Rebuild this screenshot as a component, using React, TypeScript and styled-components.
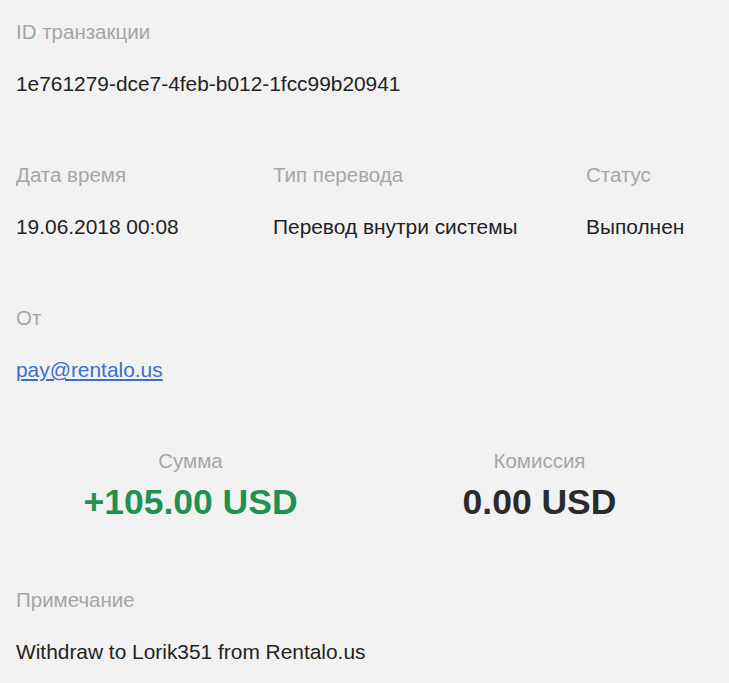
import React from "react";
import styled, { createGlobalStyle } from "styled-components";

const GlobalStyle = createGlobalStyle`
  html, body {
    margin: 0;
    padding: 0;
    background: #f2f2f2;
  }
  body {
    font-family: "Liberation Sans", Arial, sans-serif;
    color: #222;
  }
`;

function App() {
  return (
    <>
      <GlobalStyle />
      <DetailsContainer>
        <Block>
          <Field>
            <Label>ID транзакции</Label>
            <Value>1e761279-dce7-4feb-b012-1fcc99b20941</Value>
          </Field>
        </Block>

        <ColumnsBlock>
          <Field>
            <Label>Дата время</Label>
            <Value>19.06.2018 00:08</Value>
          </Field>
          <Field>
            <Label>Тип перевода</Label>
            <Value>Перевод внутри системы</Value>
          </Field>
          <Field>
            <Label>Статус</Label>
            <Value>Выполнен</Value>
          </Field>
        </ColumnsBlock>

        <Block>
          <Field>
            <Label>От</Label>
            <Value>
              <Link href="#">pay@rentalo.us</Link>
            </Value>
          </Field>
        </Block>

        <AmountBlock>
          <AmountField>
            <Label>Сумма</Label>
            <Amount positive>+105.00 USD</Amount>
          </AmountField>
          <AmountField>
            <Label>Комиссия</Label>
            <Amount>0.00 USD</Amount>
          </AmountField>
        </AmountBlock>

        <Block>
          <Field>
            <Label>Примечание</Label>
            <Value>Withdraw to Lorik351 from Rentalo.us</Value>
          </Field>
        </Block>
      </DetailsContainer>
    </>
  );
}

export default App;

const DetailsContainer = styled.div`
  padding: 0 15px 0 16px;
  width: 100%;
  box-sizing: border-box;
`;

const Block = styled.div`
  padding: 20px 0 47px;
`;

const ColumnsBlock = styled(Block)`
  display: grid;
  grid-template-columns: 257px 313px auto;
`;

const AmountBlock = styled.div`
  display: grid;
  grid-template-columns: 1fr 1fr;
  padding: 20px 0 46px;
`;

const Field = styled.div`
  display: flex;
  flex-direction: column;
`;

const AmountField = styled(Field)`
  align-items: center;
`;

const Label = styled.div`
  font-size: 20.5px;
  line-height: 24px;
  color: #a6a6a6;
`;

const Value = styled.div`
  margin-top: 28px;
  font-size: 20.9px;
  line-height: 24px;
  color: #222;
`;

const Link = styled.a`
  color: #3b6fcd;
  text-decoration: underline;
`;

const Amount = styled.div<{ positive?: boolean }>`
  margin-top: 9px;
  font-size: 35.5px;
  line-height: 40px;
  font-weight: bold;
  color: ${(p) => (p.positive ? "#1f9150" : "#2b2b2b")};
`;
